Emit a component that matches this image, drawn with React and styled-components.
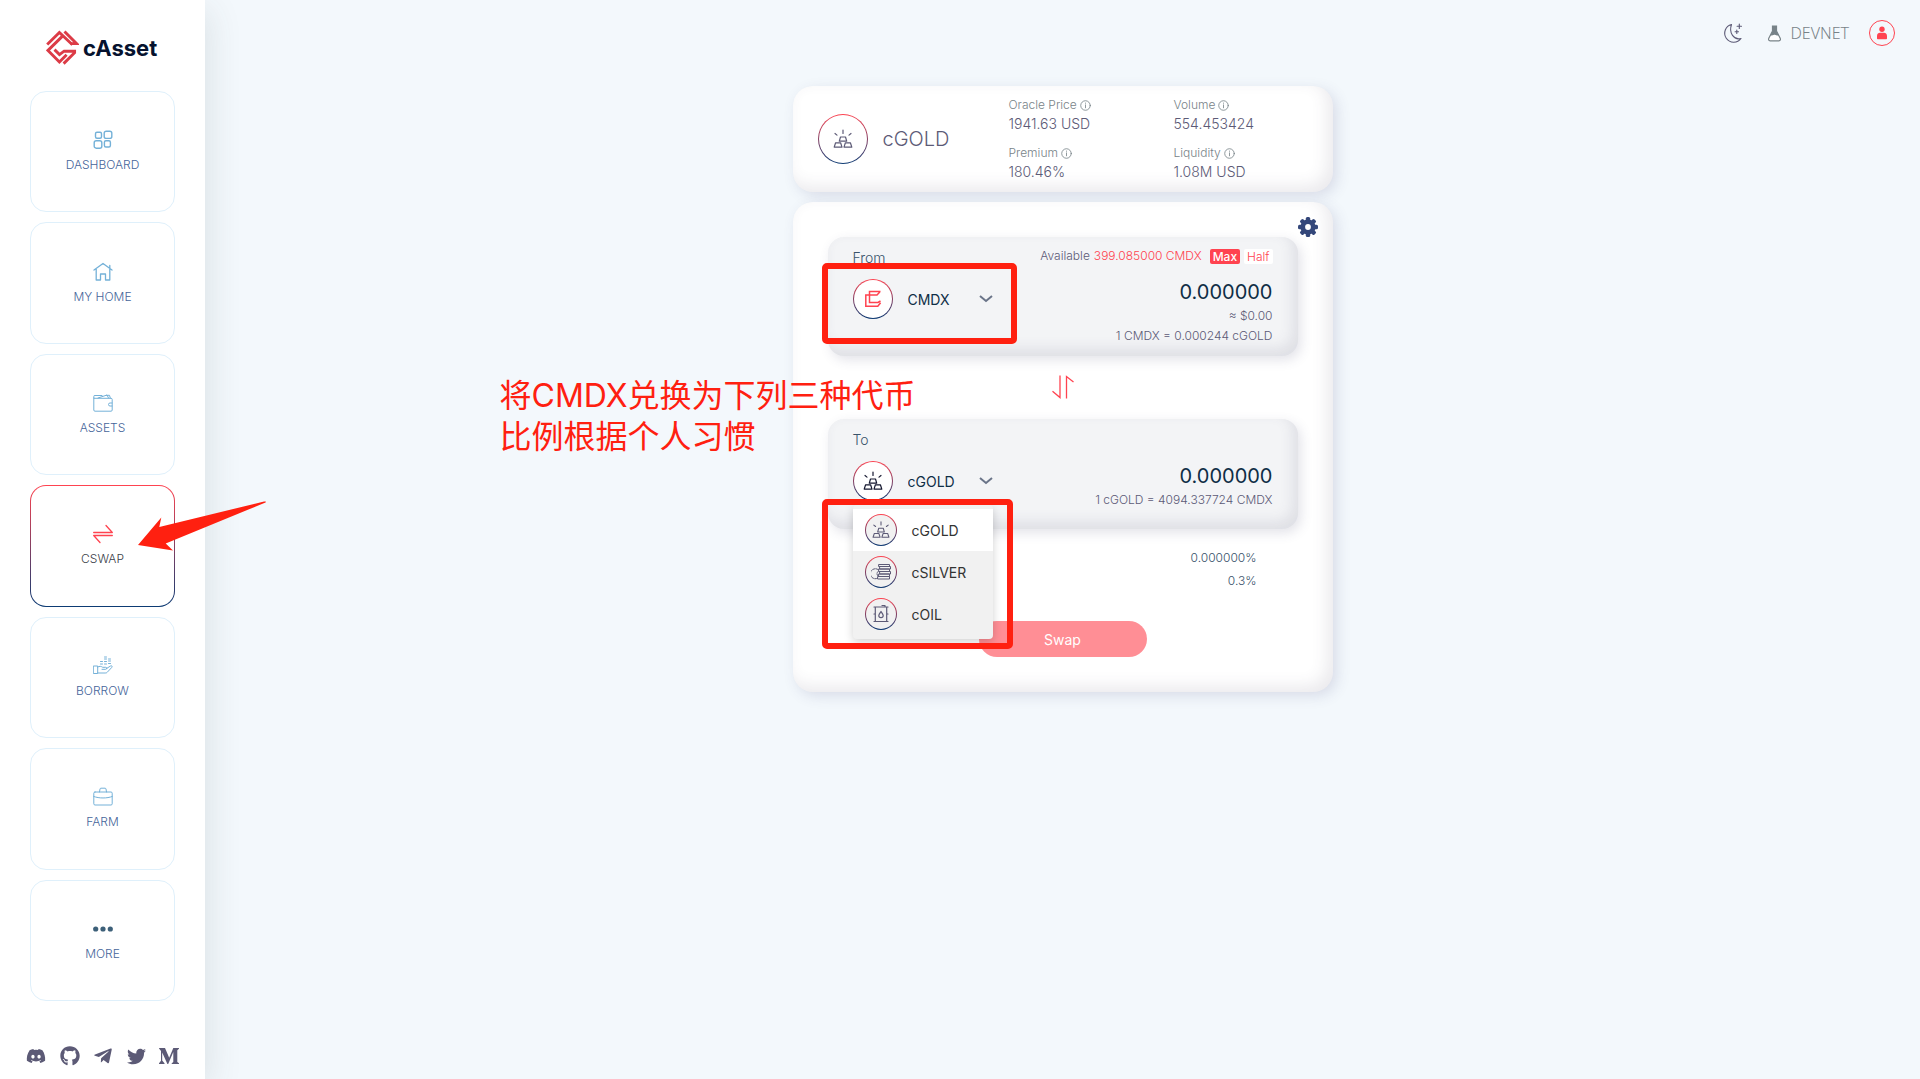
import React, { useState } from "react";
import styled, { createGlobalStyle, css } from "styled-components";
import { FaDiscord, FaGithub, FaTelegramPlane, FaTwitter } from "react-icons/fa";

const color = {
  page: "#f3f8fc",
  ink: "#0f2e46",
  muted: "#5c5a76",
  label: "#788388",
  slate: "#39536b",
  red: "#ff4350",
  navy: "#0c3b74",
  sky: "#74b1d8",
  line: "#dff0fb",
  mark: "#ff2010",
};

const GlobalStyle = createGlobalStyle`
  *, *::before, *::after { box-sizing: border-box; }
  body {
    margin: 0;
    background: ${color.page};
    color: ${color.muted};
    font-family: Inter, "Noto Sans CJK SC", sans-serif;
    font-weight: 300;
    font-size: 14px;
  }
  button, input, select { font: inherit; color: inherit; }
  a { color: inherit; text-decoration: none; }
  ul { list-style: none; margin: 0; padding: 0; }
`;

/* ---------- layout ---------- */

const Shell = styled.div`
  display: grid;
  grid-template-columns: 205px 1fr;
  min-height: 100vh;
`;

const Sidebar = styled.aside`
  display: flex;
  flex-direction: column;
  padding: 28px 30px 12px;
  background: #fff;
  box-shadow: 4px 10px 32px rgba(60, 70, 70, 0.12);
  z-index: 1;
`;

const Brand = styled.a`
  display: flex;
  align-items: center;
  gap: 4px;
  height: 39px;
  margin-left: 16px;
  color: #06122e;
  font-size: 22px;
  font-weight: 700;
`;

const Nav = styled.nav`
  flex: 1;
  display: flex;
  flex-direction: column;
  gap: 10px;
  margin-top: 24px;
`;

const gradientRing = css`
  border: 1px solid transparent;
  background:
    linear-gradient(${(p) => p.$fill || "#fff"}, ${(p) => p.$fill || "#fff"}) padding-box,
    linear-gradient(${color.red}, ${color.navy}) border-box;
`;

const NavCard = styled.a`
  position: relative;
  flex: 1;
  display: flex;
  flex-direction: column;
  align-items: center;
  justify-content: center;
  gap: 7px;
  min-height: 96px;
  border: 1px solid ${color.line};
  border-radius: 16px;
  color: #46659a;
  font-size: 12px;
  line-height: 16px;

  > svg { color: ${color.sky}; }

  ${(p) =>
    p.$active &&
    css`
      ${gradientRing}
      color: #3a4048;
      > svg { color: ${color.red}; }
    `}
`;

const Social = styled.div`
  display: flex;
  justify-content: space-between;
  align-items: center;
  height: 22px;
  margin: 44px -4px 0;
  color: ${color.muted};

  a { display: flex; }
`;

const Main = styled.main`
  display: flex;
  flex-direction: column;
`;

const TopBar = styled.header`
  display: flex;
  justify-content: flex-end;
  align-items: center;
  height: 66px;
  padding: 0 25px;
  gap: 20px;
`;

const IconButton = styled.button`
  display: flex;
  padding: 0;
  border: 0;
  background: none;
  cursor: pointer;
`;

const Network = styled.span`
  display: flex;
  align-items: center;
  gap: 9px;
  margin-left: 5px;
  color: ${color.label};
  font: 300 16px/22px "Noto Sans", "Open Sans", sans-serif;
`;

const Avatar = styled(IconButton)`
  align-items: center;
  justify-content: center;
  width: 26px;
  height: 26px;
  border: 1px solid ${color.red};
  border-radius: 50%;
  color: ${color.red};
`;

const Content = styled.div`
  display: flex;
  flex-direction: column;
  gap: 10px;
  width: 100%;
  max-width: 540px;
  margin: 20px auto 0;
`;

const Panel = styled.section`
  position: relative;
  border-radius: 20px;
  background: #fff;
  box-shadow:
    4px 4px 14px rgba(70, 70, 120, 0.15),
    inset -6px -6px 16px rgba(70, 60, 90, 0.11);
`;

/* ---------- summary ---------- */

const Summary = styled(Panel)`
  display: grid;
  grid-template-columns: 191px 1fr;
  align-items: center;
  padding: 10px 15px 10px 25px;
`;

const Asset = styled.div`
  display: flex;
  align-items: center;
  gap: 15px;
  font-size: 20px;
`;

const Ring = styled.span`
  ${gradientRing}
  flex: none;
  display: flex;
  align-items: center;
  justify-content: center;
  width: ${(p) => p.$size}px;
  height: ${(p) => p.$size}px;
  border-radius: 50%;
  color: ${(p) => p.$ink || color.muted};
`;

const Stats = styled.dl`
  display: grid;
  grid-template-columns: 165px 1fr;
  row-gap: 10px;
  margin: 0;
`;

const Stat = styled.div`
  dt {
    display: flex;
    align-items: center;
    gap: 3px;
    color: ${color.label};
    font-size: 12px;
    line-height: 18px;
  }
  dd {
    margin: 0;
    line-height: 20px;
  }
`;

/* ---------- swap form ---------- */

const SwapPanel = styled(Panel)`
  display: flex;
  flex-direction: column;
  align-items: center;
  padding: 15px 35px 35px;
`;

const Settings = styled(IconButton)`
  align-self: flex-end;
  margin-right: -20px;
  color: #34477a;
`;

const Box = styled.div`
  align-self: stretch;
  display: flex;
  justify-content: space-between;
  min-height: ${(p) => p.$height}px;
  padding: 10px 25px;
  border-radius: 16px;
  background: #f3f4f6;
  box-shadow:
    3px 4px 12px rgba(70, 70, 110, 0.15),
    inset -5px -7px 14px rgba(70, 70, 110, 0.12);
`;

const Side = styled.div`
  display: flex;
  flex-direction: column;
`;

const FieldLabel = styled.label`
  color: ${color.slate};
  line-height: 22px;
`;

const Picker = styled.div`
  position: relative;
  display: flex;
  align-items: center;
  gap: 15px;
  width: 140px;
  margin-top: 10px;

  > svg {
    position: absolute;
    right: 0;
    pointer-events: none;
  }
`;

const TokenSelect = styled.select`
  flex: 1;
  min-width: 0;
  height: 40px;
  padding: 0;
  border: 0;
  background: none;
  appearance: none;
  color: ${color.ink};
  font-weight: 400;
`;

const Menu = styled.ul`
  position: absolute;
  top: 44px;
  left: 0;
  z-index: 2;
  width: 140px;
  padding: 4px 0;
  border-radius: 4px;
  background: #f1f1f1;
  box-shadow: 0 3px 10px rgba(0, 0, 0, 0.18);
`;

const Option = styled.li`
  display: flex;
  align-items: center;
  gap: 15px;
  height: 42px;
  padding: 0 12px;
  background: ${(p) => (p.$selected ? "#fff" : "transparent")};
  color: #333;
  font-weight: 400;
`;

const Amounts = styled(Side)`
  align-items: flex-end;
  color: ${color.muted};
  font-size: 12px;
  line-height: 20px;
`;

const Available = styled.div`
  display: flex;
  align-items: center;
  gap: 4px;
  height: 18px;

  output { color: ${color.red}; }
`;

const Chip = styled.button`
  height: 15px;
  padding: 0 3px;
  border: 0;
  border-radius: 2px;
  background: ${(p) => (p.$solid ? color.red : "#fff")};
  color: ${(p) => (p.$solid ? "#fff" : color.red)};
  font-weight: ${(p) => (p.$solid ? 500 : 300)};
  line-height: 15px;
  cursor: pointer;

  output + & { margin-left: 4px; }
`;

const Amount = styled.input`
  width: 160px;
  height: 29px;
  margin-top: ${(p) => p.$gap}px;
  padding: 0;
  border: 0;
  background: none;
  color: ${color.ink};
  font-size: 20px;
  font-weight: 400;
  text-align: right;
`;

const Flip = styled(IconButton)`
  margin: 19px 0 20px;
  color: ${color.red};
`;

const Details = styled.ul`
  align-self: flex-end;
  margin: 17px 41px 0 0;
  color: ${color.slate};
  font-size: 12px;
  line-height: 23px;
  text-align: right;
`;

const Submit = styled.button`
  width: 168px;
  height: 36px;
  margin-top: 29px;
  border: 0;
  border-radius: 18px;
  background: #ff8e95;
  color: #fff;
  font-weight: 400;
`;

/* ---------- tutorial marks ---------- */

const Frame = styled.span`
  position: absolute;
  top: ${(p) => p.$top}px;
  left: -31px;
  z-index: 3;
  width: ${(p) => p.$width}px;
  height: ${(p) => p.$height}px;
  border: 6px solid ${color.mark};
  border-radius: 5px;
  pointer-events: none;
`;

const Note = styled.p`
  position: absolute;
  top: 173px;
  left: -293px;
  z-index: 3;
  margin: 0;
  color: ${color.mark};
  font: 400 32px/41px Inter, "Noto Sans CJK SC", sans-serif;
  white-space: nowrap;
`;

const Pointer = styled.svg`
  position: absolute;
  top: 14px;
  left: 106px;

  && { color: ${color.mark}; }
`;

/* ---------- drawings ---------- */

const Line = ({ size = 20, width = 1, box = 20, children }) => (
  <svg
    width={size}
    height={size}
    viewBox={`0 0 ${box} ${box}`}
    fill="none"
    stroke="currentColor"
    strokeWidth={width}
    strokeLinejoin="round"
    strokeLinecap="round"
    aria-hidden="true"
  >
    {children}
  </svg>
);

const LogoMark = () => (
  <svg width="33" height="36" viewBox="0 0 33 36" fill="none" stroke="#dc3b46" strokeWidth="2.9" aria-hidden="true">
    <path d="M1.200 14.500 13.400 2.500l13 12.200" />
    <path d="M18.500 1.400 30.500 13.600H24.500" />
    <path d="M17 5.600 2 20.400 13.400 32l7.200-7.200" />
    <path d="m8.500 19.600 5 5 4.600-3.400h10.500v1.500L17.600 33.600" />
  </svg>
);

const DashboardIcon = () => (
  <Line width={1.4}>
    <rect x="2.5" y="2.2" width="6" height="6" rx="1.5" />
    <rect x="11.2" y="1.2" width="7.6" height="7.2" rx="2" />
    <rect x="1.2" y="10.8" width="7.6" height="7.4" rx="2" />
    <rect x="11.4" y="10.8" width="6" height="6.2" rx="1.5" />
  </Line>
);
const HomeIcon = () => (
  <Line width={1.3}>
    <path d="M1 8 10 1.5 19 8M3.2 7v11h4.3v-6h5v6h4.3V7M16.8 6V3.5" />
  </Line>
);
const WalletIcon = () => (
  <Line>
    <path d="M.8 5v12a1.2 1.2 0 0 0 1.2 1.2h16a1.2 1.2 0 0 0 1.2-1.2V6.500a1.200 1.200 0 0 0-1.200-1.200H.8V3.500A1 1 0 0 1 2 2.500h7M5 5l9-3 1.500 3M13.500 2.300h3l.8 2.700M19 10h-2a1.500 1.500 0 0 0 0 3h2" />
  </Line>
);
const SwapIcon = () => (
  <Line width={1.3}>
    <path d="M.7 8.500h18.600L13 1.500M19.300 11.500H.7L7 18.500" />
  </Line>
);
const BorrowIcon = () => (
  <Line>
    <path d="M.7 10h4v7.500h-4zM4.700 11c2-1 3.500-.8 5 .3h3c1.500 0 1.500 2 0 2H9M13.500 12.500l4-2.500c1.500-.6 2.200.5 1.200 1.500l-4.500 4.800c-.6.600-1 .700-2 .700H4.700" />
    <path d="M7.500 8h2M7.500 5.500h2M11.500 8h2M11.500 5.500h2M11.500 3h2M11.500 1h2M15.500 7.500h2M15.500 5h2M15.500 3h2" />
  </Line>
);
const FarmIcon = () => (
  <Line>
    <path d="M2 5h16a1.200 1.200 0 0 1 1.200 1.200v10.600A1.200 1.200 0 0 1 18 18H2a1.200 1.200 0 0 1-1.200-1.200V6.200A1.200 1.200 0 0 1 2 5ZM6.500 5l.5-3a1 1 0 0 1 1-.8h4a1 1 0 0 1 1 .8l.5 3M.8 9.500c5.500 2 13 2 18.400 0" />
  </Line>
);
const MoreIcon = () => (
  <svg width="20" height="20" viewBox="0 0 20 20" fill="#3d6079" aria-hidden="true">
    <circle cx="2.700" cy="10" r="2.600" />
    <circle cx="10" cy="10" r="2.600" />
    <circle cx="17.300" cy="10" r="2.600" />
  </svg>
);
const MediumIcon = () => (
  <svg width="20" height="18" viewBox="0 0 20 18" fill="currentColor" aria-hidden="true">
    <path d="M0 1h6l4.200 9.800L14.300 1H20v.8l-1.700 1.400v11.900L20 16.300v.7h-7.300v-.7l1.600-1.300V5L9.200 17h-.8L3.200 5.500v8L5.500 16.300v.7H0v-.7l2-2.600V4L.2 1.800z" />
  </svg>
);
const GoldIcon = ({ size = 20 }) => (
  <Line size={size} width={1.2}>
    <path d="M7.500 8h5l1.200 4.200H6.300zM2.600 13.800h5l1.400 4.300H1.200zM12.400 13.800h5l1.400 4.300H11zM10 1v3.500M2 4.500l2 1.600M18 4.500l-2 1.600" />
  </Line>
);
const SilverIcon = () => (
  <Line size={20}>
    <path d="M8 2.500h10.500v2H8zM9 4.500h10.500v2.500H9zM8 7h10.500v2.500H8zM9 9.500h10.500V12H9zM8 12h10.500v2.500H8zM7 14.500h11.500V17H7z" />
    <path d="M7 7.500a5 5 0 1 0 0 8.500M7 9.500a3 3 0 0 0 0 4.500" strokeDasharray="2 1" />
  </Line>
);
const OilIcon = () => (
  <Line size={20} width={1.2}>
    <path d="M3 3h14M3 17.500h14M4.300 3v14.500M15.700 3v14.500M3 10h1M16 10h1M11 1.500h3V3M10 7.500c1.500 2 2.200 2.800 2.200 4a2.200 2.200 0 0 1-4.400 0c0-1.200.7-2 2.200-4Z" />
  </Line>
);
const CmdxIcon = () => (
  <svg width="18" height="18" viewBox="0 0 18 18" fill="none" stroke={color.red} strokeWidth="1.500" aria-hidden="true">
    <path d="M16.500 1.500H5.500v11h8.500l2.500-1.500M15.800 2 13 5H1.800v11.300h12l2.800-3.500" />
  </svg>
);
const Chevron = () => (
  <svg width="14" height="8" viewBox="0 0 14 8" fill="none" stroke="#6a7488" strokeWidth="2" aria-hidden="true">
    <path d="m1 1 6 5 6-5" />
  </svg>
);
const InfoIcon = () => (
  <Line size={11} box={12} width={0.9}>
    <circle cx="6" cy="6" r="5.200" />
    <path d="M6 5.300v3.200M6 3.300v.3" />
  </Line>
);
const GearIcon = () => (
  <svg width="20" height="20" viewBox="-10 -10 20 20" aria-hidden="true">
    <g fill="currentColor">
      {[0, 45, 90, 135].map((a) => (
        <rect key={a} x="-2.200" y="-10" width="4.400" height="20" rx="1.500" transform={`rotate(${a})`} />
      ))}
      <circle r="7.600" />
    </g>
    <circle r="2.900" fill="#fff" />
  </svg>
);
const FlipIcon = () => (
  <svg width="22" height="24" viewBox="0 0 22 24" fill="none" stroke="currentColor" strokeWidth="1.300" aria-hidden="true">
    <path d="M8 .5v22L.5 16.300M14.500 23.500V1.500L21.500 7" />
  </svg>
);
const MoonIcon = () => (
  <Line size={21} width={1.100} box={21}>
    <path d="M9.500 1.500A9 9 0 1 0 19 15.500C12 17.500 6.500 10 9.500 1.500ZM17.300 1v4.400M15.100 3.200h4.400M14.800 7v3.400M13.100 8.700h3.400" />
  </Line>
);
const FlaskIcon = () => (
  <svg width="13" height="17" viewBox="0 0 13 17" aria-hidden="true">
    <path d="M4.500 1h4v5l3.700 7.300c.6 1.300.1 2.500-1.300 2.500H2.100c-1.400 0-1.900-1.200-1.300-2.500L4.500 6z" fill="#fff" stroke={color.label} strokeWidth="1.200" />
    <path d="M4.500 1h4v5l2.200 4.300c-2 .8-2.700-1-4.500-.5-1.500.4-2.500 1-3.800.5L4.500 6z" fill={color.label} />
  </svg>
);
const UserIcon = () => (
  <svg width="12" height="14" viewBox="0 0 12 14" fill="currentColor" aria-hidden="true">
    <circle cx="6" cy="3.200" r="2.700" />
    <path d="M1 10c0-2 1.500-3.200 3-3.200h4c1.500 0 3 1.200 3 3.200v2.500c0 .5-.3.800-.8.800H1.800c-.5 0-.8-.3-.8-.8z" />
  </svg>
);

/* ---------- data ---------- */

const navItems = [
  ["DASHBOARD", DashboardIcon],
  ["MY HOME", HomeIcon],
  ["ASSETS", WalletIcon],
  ["CSWAP", SwapIcon],
  ["BORROW", BorrowIcon],
  ["FARM", FarmIcon],
  ["MORE", MoreIcon],
];

const stats = [
  ["Oracle Price", "1941.63 USD"],
  ["Volume", "554.453424"],
  ["Premium", "180.46%"],
  ["Liquidity", "1.08M USD"],
];

const tokens = [
  ["cGOLD", GoldIcon],
  ["cSILVER", SilverIcon],
  ["cOIL", OilIcon],
];

const socials = [
  ["Discord", <FaDiscord size={20} />],
  ["GitHub", <FaGithub size={20} />],
  ["Telegram", <FaTelegramPlane size={20} />],
  ["Twitter", <FaTwitter size={19} />],
  ["Medium", <MediumIcon />],
];

export default function App() {
  const [from, setFrom] = useState("0.000000");
  const [to, setTo] = useState("0.000000");
  const [token, setToken] = useState("cGOLD");

  return (
    <>
      <GlobalStyle />
      <Shell>
        <Sidebar>
          <Brand href="#">
            <LogoMark />
            cAsset
          </Brand>
          <Nav>
            {navItems.map(([name, Icon]) => (
              <NavCard key={name} href="#" $active={name === "CSWAP"}>
                <Icon />
                {name}
                {name === "CSWAP" && (
                  <Pointer width="130" height="52" viewBox="0 0 130 52" fill="currentColor" aria-hidden="true">
                    <path d="M1 45 24.300 17.500 22.300 27 127 1.500Q130 1 128.500 2.500L28.700 43.500 36 50.500Z" />
                  </Pointer>
                )}
              </NavCard>
            ))}
          </Nav>
          <Social>
            {socials.map(([name, icon]) => (
              <a key={name} href="#" aria-label={name}>
                {icon}
              </a>
            ))}
          </Social>
        </Sidebar>

        <Main>
          <TopBar>
            <IconButton aria-label="Dark mode">
              <MoonIcon />
            </IconButton>
            <Network>
              <FlaskIcon />
              DEVNET
            </Network>
            <Avatar aria-label="Account">
              <UserIcon />
            </Avatar>
          </TopBar>

          <Content>
            <Summary>
              <Asset>
                <Ring $size={50}>
                  <GoldIcon />
                </Ring>
                cGOLD
              </Asset>
              <Stats>
                {stats.map(([name, value]) => (
                  <Stat key={name}>
                    <dt>
                      {name} <InfoIcon />
                    </dt>
                    <dd>{value}</dd>
                  </Stat>
                ))}
              </Stats>
            </Summary>

            <SwapPanel>
              <Settings aria-label="Settings">
                <GearIcon />
              </Settings>

              <Box $height={119}>
                <Side>
                  <FieldLabel htmlFor="from-token">From</FieldLabel>
                  <Picker>
                    <Ring $size={40}>
                      <CmdxIcon />
                    </Ring>
                    <TokenSelect id="from-token" defaultValue="CMDX">
                      <option>CMDX</option>
                    </TokenSelect>
                    <Chevron />
                    <Frame $top={-16} $width={195} $height={81} />
                  </Picker>
                </Side>
                <Amounts>
                  <Available>
                    Available <output>399.085000 CMDX</output>
                    <Chip $solid>Max</Chip>
                    <Chip>Half</Chip>
                  </Available>
                  <Amount $gap={12} aria-label="From amount" value={from} onChange={(e) => setFrom(e.target.value)} />
                  <span>≈ $0.00</span>
                  <span>1 CMDX = 0.000244 cGOLD</span>
                </Amounts>
              </Box>

              <Flip aria-label="Switch direction">
                <FlipIcon />
              </Flip>

              <Box $height={110}>
                <Side>
                  <FieldLabel htmlFor="to-token">To</FieldLabel>
                  <Picker>
                    <Ring $size={40} $ink="#14172f">
                      <GoldIcon />
                    </Ring>
                    <TokenSelect id="to-token" value={token} onChange={(e) => setToken(e.target.value)}>
                      {tokens.map(([name]) => (
                        <option key={name}>{name}</option>
                      ))}
                    </TokenSelect>
                    <Chevron />
                    <Menu role="listbox" aria-label="To token">
                      {tokens.map(([name, Icon]) => (
                        <Option
                          key={name}
                          role="option"
                          aria-selected={name === token}
                          $selected={name === token}
                          onClick={() => setToken(name)}
                        >
                          <Ring $size={32} $fill="#f1f1f1">
                            <Icon size={18} />
                          </Ring>
                          {name}
                        </Option>
                      ))}
                    </Menu>
                    <Frame $top={38} $width={191} $height={150} />
                  </Picker>
                </Side>
                <Amounts>
                  <Amount $gap={32} aria-label="To amount" value={to} onChange={(e) => setTo(e.target.value)} />
                  <span>1 cGOLD = 4094.337724 CMDX</span>
                </Amounts>
              </Box>

              <Details>
                <li>0.000000%</li>
                <li>0.3%</li>
              </Details>

              <Submit>Swap</Submit>

              <Note>
                将CMDX兑换为下列三种代币
                <br />
                比例根据个人习惯
              </Note>
            </SwapPanel>
          </Content>
        </Main>
      </Shell>
    </>
  );
}
